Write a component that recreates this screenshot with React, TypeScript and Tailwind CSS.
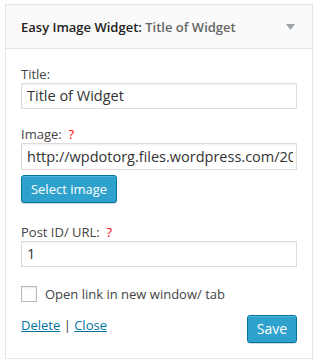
import React from "react";

export default function App() {
  const font = { fontFamily: '"Open Sans", "Noto Sans", sans-serif' };
  return (
    <div className="w-[320px] h-[363px] bg-white pt-[4px] pl-[5px]" style={font}>
      <div className="w-[308px] border border-[#e5e5e5] bg-white">
        <div className="h-[44px] bg-[#fafafa] border-b border-[#e5e5e5] flex items-center justify-between pl-[15px] pr-[17px]">
          <div className="text-[13px] font-semibold text-[#222] leading-[18px]">
            Easy Image Widget: <span className="text-[#666]">Title of Widget</span>
          </div>
          <svg width="9" height="6" viewBox="0 0 9 6" className="mt-[1px]">
            <polygon points="0,0 9,0 4.5,6" fill="#a0a5aa" />
          </svg>
        </div>
        <div className="px-[15px] pt-[16px] pb-[15px] text-[13px] text-[#444] leading-[18px]">
          <div>Title:</div>
          <div className="w-[276px] h-[26px] border border-[#ddd] shadow-[inset_0_1px_2px_rgba(0,0,0,0.07)] flex items-center pl-[5px] text-[14.5px] text-[#333]">
            Title of Widget
          </div>
          <div className="mt-[16px]">
            Image:&nbsp; <span className="text-[#ff0000]">?</span>
          </div>
          <div className="w-[276px] h-[27px] border border-[#ddd] shadow-[inset_0_1px_2px_rgba(0,0,0,0.07)] flex items-center pl-[5px] pr-[3px] text-[14.5px] text-[#333] overflow-hidden whitespace-nowrap">
            <span className="block overflow-hidden">http://wpdotorg.files.wordpress.com/20</span>
          </div>
          <div className="mt-[5px] w-[96px] h-[28px] rounded-[3px] bg-[#2ea2cc] border border-[#0074a2] shadow-[inset_0_1px_0_rgba(120,200,230,0.5),0_1px_0_rgba(0,0,0,0.15)] text-white flex items-center justify-center text-[13px]">
            Select image
          </div>
          <div className="mt-[20px]">
            Post ID/ URL:&nbsp; <span className="text-[#ff0000]">?</span>
          </div>
          <div className="w-[276px] h-[26px] border border-[#ddd] shadow-[inset_0_1px_2px_rgba(0,0,0,0.07)] flex items-center pl-[5px] text-[14.5px] text-[#333]">
            1
          </div>
          <div className="mt-[18px] flex items-center">
            <div className="w-[16px] h-[16px] border border-[#bbb] bg-white shadow-[inset_0_1px_2px_rgba(0,0,0,0.1)]" />
            <span className="ml-[8px] text-[13px] text-[#444]">Open link in new window/ tab</span>
          </div>
          <div className="mt-[12px] flex justify-between items-start">
            <div className="mt-[1px]">
              <span className="text-[#0074a2] underline">Delete</span>
              <span className="text-[#444]"> | </span>
              <span className="text-[#0074a2] underline">Close</span>
            </div>
            <div className="w-[50px] h-[28px] rounded-[3px] bg-[#2ea2cc] border border-[#0074a2] shadow-[inset_0_1px_0_rgba(120,200,230,0.5),0_1px_0_rgba(0,0,0,0.15)] text-white flex items-center justify-center text-[14px]">
              Save
            </div>
          </div>
        </div>
      </div>
    </div>
  );
}
